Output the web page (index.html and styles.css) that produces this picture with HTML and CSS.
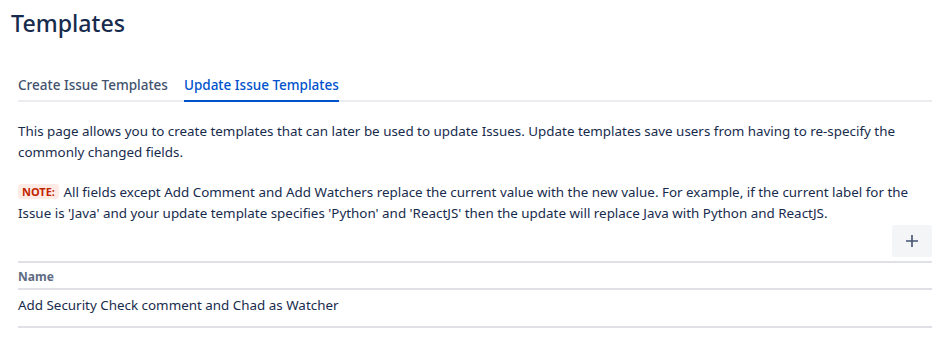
FILE: index.html
```html
<!DOCTYPE html>
<html>
<head>
<meta charset="utf-8">
<link rel="stylesheet" href="styles.css">
</head>
<body>
<div class="page">
  <h1 class="title">Templates</h1>
  <div class="content">
    <div class="tabs">
      <div class="tab">Create Issue Templates</div>
      <div class="tab active">Update Issue Templates</div>
    </div>
    <p class="desc">This page allows you to create templates that can later be used to update Issues. Update templates save users from having to re-specify the commonly changed fields.</p>
    <p class="note"><span class="lozenge">Note:</span> All fields except Add Comment and Add Watchers replace the current value with the new value. For example, if the current label for the Issue is 'Java' and your update template specifies 'Python' and 'ReactJS' then the update will replace Java with Python and ReactJS.</p>
    <div class="actions">
      <button class="add-btn" aria-label="Add">
        <svg width="16" height="16" viewBox="0 0 16 16"><path d="M8 2v12M2 8h12" stroke="#42526E" stroke-width="1.6" fill="none"/></svg>
      </button>
    </div>
    <table class="table">
      <thead><tr><th>Name</th></tr></thead>
      <tbody><tr><td>Add Security Check comment and Chad as Watcher</td></tr></tbody>
    </table>
  </div>
</div>
</body>
</html>
```
FILE: styles.css
```css
* { box-sizing: border-box; }
body {
  margin: 0;
  background: #fff;
  font-family: "Noto Sans", "Open Sans", sans-serif;
  color: #172B4D;
  font-size: 13.4px;
}
.page { padding: 0 19px 0 11px; }
.title {
  margin: 0;
  padding-top: 9px;
  font-size: 23.2px;
  font-weight: 500;
  line-height: 28px;
  color: #172B4D;
}
.content { padding-left: 7px; }
.tabs {
  display: flex;
  gap: 16px;
  margin-top: 38px;
  border-bottom: 2px solid #EBECF0;
}
.tab {
  font-size: 13.5px;
  font-weight: 500;
  color: #42526E;
  line-height: 20px;
  padding-bottom: 5px;
  margin-bottom: -2px;
  border-bottom: 2px solid transparent;
}
.tab.active { color: #0052CC; border-bottom-color: #0052CC; }
.desc { margin: 19px 0 0; line-height: 21px; }
.note { margin: 19px 0 0; line-height: 21px; }
.lozenge {
  display: inline-block;
  background: #FFEBE6;
  color: #BF2600;
  font-size: 11px;
  font-weight: 700;
  text-transform: uppercase;
  padding: 0 4px;
  margin-right: 1px;
  line-height: 15px;
  border-radius: 3px;
  vertical-align: 1px;
}
.actions { display: flex; justify-content: flex-end; margin-top: 1px; }
.add-btn {
  width: 40px; height: 32px;
  border: 0; border-radius: 3px;
  background: #F4F5F7;
  display: flex; align-items: center; justify-content: center;
  padding: 0;
}
.table { width: 100%; border-collapse: collapse; margin-top: 4px; }
.table th {
  text-align: left;
  font-size: 12px;
  font-weight: 700;
  color: #5E6C84;
  border-top: 2px solid #DFE1E6;
  border-bottom: 2px solid #DFE1E6;
  padding: 6px 0 3px;
  line-height: 16px;
}
.table td {
  border-bottom: 2px solid #DFE1E6;
  padding: 5px 0 11px;
  line-height: 20px;
}
```
